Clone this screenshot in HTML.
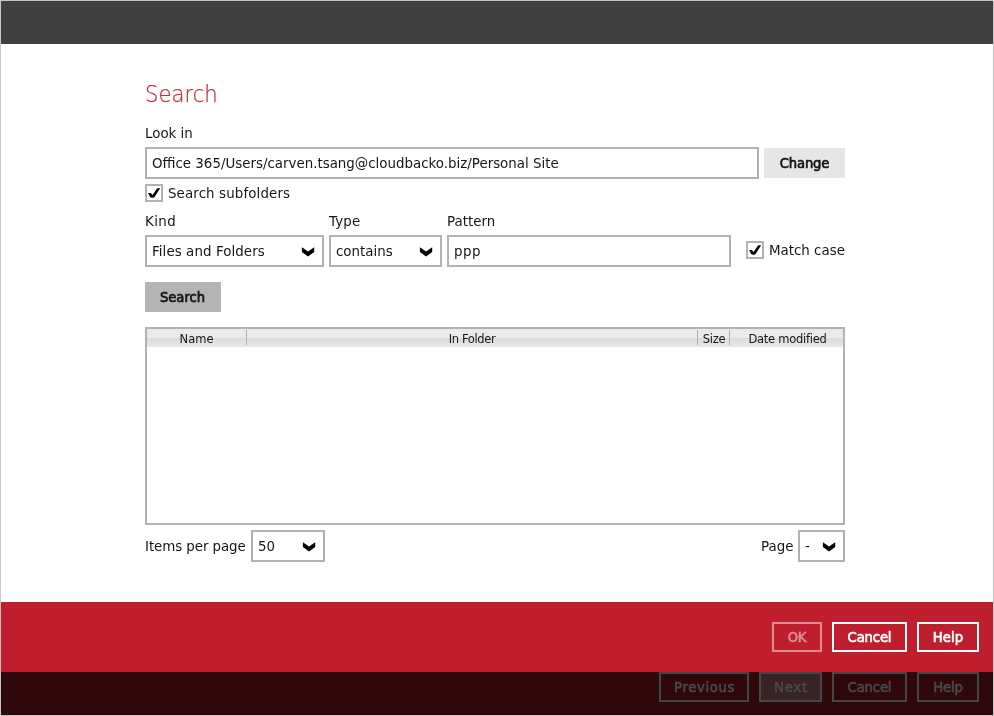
<!DOCTYPE html>
<html lang="en">
<head>
<meta charset="utf-8">
<title>Search</title>
<style>
html,body{margin:0;padding:0;}
body{width:994px;height:716px;position:relative;overflow:hidden;background:#fff;
  font-family:"DejaVu Sans","Liberation Sans",sans-serif;font-size:13.4px;color:#161616;}
*{box-sizing:border-box;}
.abs{position:absolute;}
.frame{left:0;top:0;width:994px;height:716px;border:1px solid #c6c6c6;pointer-events:none;z-index:10;}
.topbar{left:1px;top:1px;width:992px;height:43px;background:#404040;}
.t{position:absolute;white-space:nowrap;line-height:20px;height:20px;}
.title{font-family:"DejaVu Sans Light","DejaVu Sans","Liberation Sans",sans-serif;font-size:23.5px;color:#c4303d;line-height:30px;height:30px;transform-origin:0 0;transform:scaleX(0.9);-webkit-text-stroke:0.25px #c4303d;}
.box{position:absolute;border:2px solid #b2b2b2;background:#fff;}
.btn{position:absolute;text-align:center;color:#141414;font-family:"DejaVu Sans","Liberation Sans",sans-serif;font-weight:400;font-size:13.2px;-webkit-text-stroke:0.65px currentColor;letter-spacing:-0.15px;line-height:32px;height:30px;white-space:nowrap;}
.chev{position:absolute;width:13px;height:10px;overflow:visible;}
.cb{position:absolute;width:18px;height:18px;border:2px solid #b2b2b2;background:#fff;}
.cb svg{position:absolute;left:0;top:0;width:14px;height:14px;}
.hdr{position:absolute;left:147px;top:329px;width:696px;height:18px;
  background:linear-gradient(to bottom,#e9e9e9 0,#ebebeb 9px,#dadada 9px,#e8e8e8 18px);}
.div{position:absolute;top:330px;width:1px;height:15px;background:#b0b0b0;}
.th{position:absolute;top:330px;height:18px;line-height:18px;font-size:11.5px;text-align:center;white-space:nowrap;}
.redbar{left:1px;top:602px;width:992px;height:70px;background:#be1e2d;}
.darkbar{left:1px;top:672px;width:992px;height:43px;background:#2f080c;}
.wb{border:2px solid #fff;color:#fff;line-height:28px;}
.db{border:2px solid #424747;color:#454a4a;line-height:28px;}
</style>
</head>
<body>
<div id="root" style="position:absolute;left:0;top:0;width:994px;height:716px;will-change:transform;">
<div class="abs topbar"></div>

<div class="t title" style="left:145px;top:79px;">Search</div>

<div class="t" style="left:145px;top:124px;">Look in</div>
<div class="box" style="left:145px;top:147px;width:614px;height:32px;"></div>
<div class="t" style="left:152px;top:154px;">Office 365/Users/carven.tsang@cloudbacko.biz/Personal Site</div>
<div class="btn" style="left:764px;top:148px;width:81px;background:#e6e6e6;">Change</div>

<div class="cb" style="left:145px;top:184px;"><svg viewBox="0 0 14 14"><path d="M1.0 7.1 L3.8 7.1 L5.6 9.0 L10.0 2.5 L12.7 2.1 L12.8 2.8 L7.6 10.9 Q6.6 11.9 5.3 11.8 L3.3 11.3 Z" fill="#000"/></svg></div>
<div class="t" style="left:168px;top:184px;letter-spacing:0.12px;">Search subfolders</div>

<div class="t" style="left:145px;top:212px;letter-spacing:0.4px;">Kind</div>
<div class="t" style="left:329px;top:212px;letter-spacing:0.15px;">Type</div>
<div class="t" style="left:447px;top:212px;">Pattern</div>

<div class="box" style="left:145px;top:235px;width:179px;height:32px;"></div>
<div class="t" style="left:152px;top:242px;letter-spacing:0.08px;">Files and Folders</div>
<svg class="chev" style="left:302px;top:247px;" viewBox="0 0 13 10"><path d="M-0.1 0.2 L6.05 4.6 L12.2 0.2 L12.2 4.9 L6.05 9.5 L-0.1 4.9 Z" fill="#000"/></svg>

<div class="box" style="left:329px;top:235px;width:113px;height:32px;"></div>
<div class="t" style="left:336px;top:242px;">contains</div>
<svg class="chev" style="left:420px;top:247px;" viewBox="0 0 13 10"><path d="M-0.1 0.2 L6.05 4.6 L12.2 0.2 L12.2 4.9 L6.05 9.5 L-0.1 4.9 Z" fill="#000"/></svg>

<div class="box" style="left:447px;top:235px;width:284px;height:32px;"></div>
<div class="t" style="left:454px;top:242px;letter-spacing:0.5px;">ppp</div>

<div class="cb" style="left:746px;top:241px;"><svg viewBox="0 0 14 14"><path d="M1.0 7.1 L3.8 7.1 L5.6 9.0 L10.0 2.5 L12.7 2.1 L12.8 2.8 L7.6 10.9 Q6.6 11.9 5.3 11.8 L3.3 11.3 Z" fill="#000"/></svg></div>
<div class="t" style="left:769px;top:241px;">Match case</div>

<div class="btn" style="left:145px;top:282px;width:76px;background:#b4b4b4;letter-spacing:-0.05px;padding-right:1px;">Search</div>

<div class="box" style="left:145px;top:327px;width:700px;height:198px;"></div>
<div class="hdr"></div>
<div class="div" style="left:246px;"></div>
<div class="div" style="left:697px;"></div>
<div class="div" style="left:729px;"></div>
<div class="th" style="left:147px;width:99px;">Name</div>
<div class="th" style="left:247px;width:450px;letter-spacing:-0.35px;">In Folder</div>
<div class="th" style="left:698px;width:32px;letter-spacing:-0.3px;">Size</div>
<div class="th" style="left:730px;width:115px;letter-spacing:-0.25px;">Date modified</div>

<div class="t" style="left:145px;top:537px;letter-spacing:-0.07px;">Items per page</div>
<div class="box" style="left:251px;top:530px;width:74px;height:32px;"></div>
<div class="t" style="left:258px;top:537px;">50</div>
<svg class="chev" style="left:303px;top:542px;" viewBox="0 0 13 10"><path d="M-0.1 0.2 L6.05 4.6 L12.2 0.2 L12.2 4.9 L6.05 9.5 L-0.1 4.9 Z" fill="#000"/></svg>

<div class="t" style="left:761px;top:537px;">Page</div>
<div class="box" style="left:798px;top:530px;width:47px;height:32px;"></div>
<div class="t" style="left:805px;top:537px;">-</div>
<svg class="chev" style="left:823px;top:542px;" viewBox="0 0 13 10"><path d="M-0.1 0.2 L6.05 4.6 L12.2 0.2 L12.2 4.9 L6.05 9.5 L-0.1 4.9 Z" fill="#000"/></svg>

<div class="abs redbar"></div>
<div class="abs darkbar"></div>

<div class="btn wb" style="left:772px;top:622px;width:50px;border-color:#de8a93;color:#de8a93;">OK</div>
<div class="btn wb" style="left:832px;top:622px;width:75px;">Cancel</div>
<div class="btn wb" style="left:917px;top:622px;width:62px;letter-spacing:0.1px;">Help</div>

<div class="btn db" style="left:659px;top:672px;width:90px;letter-spacing:0.65px;padding-left:1px;">Previous</div>
<div class="btn db" style="left:759px;top:672px;width:63px;background:#382224;letter-spacing:0.8px;padding-left:1px;">Next</div>
<div class="btn db" style="left:832px;top:672px;width:75px;">Cancel</div>
<div class="btn db" style="left:917px;top:672px;width:62px;">Help</div>

<div class="abs frame"></div>
</div>
</body>
</html>
